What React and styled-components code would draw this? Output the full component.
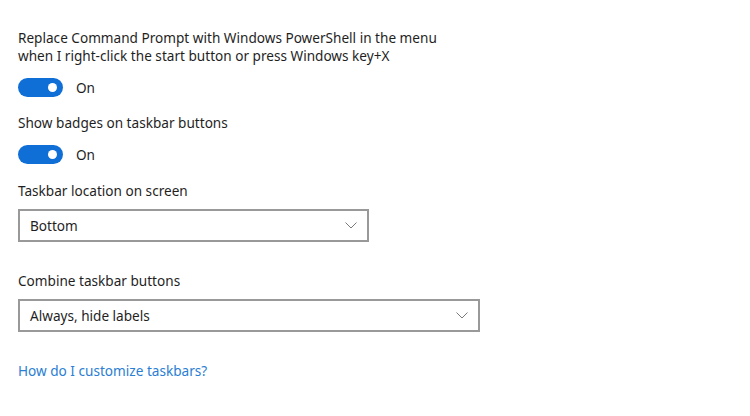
import React from "react";
import styled, { createGlobalStyle } from "styled-components";

const GlobalStyle = createGlobalStyle`
  html, body {
    margin: 0;
    padding: 0;
    background: #ffffff;
  }
  body {
    font-family: "Noto Sans", "Open Sans", "Liberation Sans", sans-serif;
    color: #1a1a1a;
  }
`;

const Page = styled.div`
  width: 750px;
  height: 416px;
  box-sizing: border-box;
  padding: 29px 18px 0 18px;
  display: flex;
  flex-direction: column;
  background: #fff;
`;

const Label = styled.div`
  font-size: 13.6px;
  line-height: 18px;
  color: #1f1f1f;
`;

const Section = styled.div`
  display: flex;
  flex-direction: column;
  margin-bottom: ${(p) => p.$gap || 0}px;
`;

const ToggleRow = styled.div`
  display: flex;
  align-items: center;
  gap: 13px;
  margin-top: ${(p) => p.$top || 10}px;
  height: 20px;
`;

const Track = styled.div`
  width: 45px;
  height: 19px;
  border-radius: 10px;
  background: #0f6fd6;
  position: relative;
  flex-shrink: 0;
`;

const Knob = styled.span`
  position: absolute;
  right: 6px;
  top: 5px;
  width: 9px;
  height: 9px;
  border-radius: 50%;
  background: #fff;
`;

const ToggleText = styled.span`
  font-size: 13.6px;
  color: #1f1f1f;
`;

const Select = styled.div`
  margin-top: ${(p) => p.$top || 10}px;
  width: ${(p) => p.$width}px;
  height: ${(p) => p.$height || 32}px;
  box-sizing: border-box;
  border: 2px solid #999999;
  display: flex;
  align-items: center;
  justify-content: space-between;
  padding: 0 10px 0 10px;
  font-size: 13.6px;
  color: #1f1f1f;
`;

const Chevron = () => (
  <svg width="12" height="7" viewBox="0 0 12 7" fill="none">
    <path d="M0.5 0.5 L6 6 L11.5 0.5" stroke="#7a7a7a" strokeWidth="1" />
  </svg>
);

const Link = styled.a`
  font-size: 13.6px;
  color: #2a7ed3;
  text-decoration: none;
  cursor: pointer;
`;

function Toggle({ top }) {
  return (
    <ToggleRow $top={top}>
      <Track>
        <Knob />
      </Track>
      <ToggleText>On</ToggleText>
    </ToggleRow>
  );
}

export default function App() {
  return (
    <>
      <GlobalStyle />
      <Page>
        <Section $gap={17}>
          <Label>
            Replace Command Prompt with Windows PowerShell in the menu
            <br />
            when I right-click the start button or press Windows key+X
          </Label>
          <Toggle top={12} />
        </Section>
        <Section $gap={18}>
          <Label>Show badges on taskbar buttons</Label>
          <Toggle top={12} />
        </Section>
        <Section $gap={30}>
          <Label>Taskbar location on screen</Label>
          <Select $width={351} $top={9} $height={33}>
            <span>Bottom</span>
            <Chevron />
          </Select>
        </Section>
        <Section $gap={29}>
          <Label>Combine taskbar buttons</Label>
          <Select $width={462} $top={9} $height={33}>
            <span>Always, hide labels</span>
            <Chevron />
          </Select>
        </Section>
        <Section>
          <Link>How do I customize taskbars?</Link>
        </Section>
      </Page>
    </>
  );
}
